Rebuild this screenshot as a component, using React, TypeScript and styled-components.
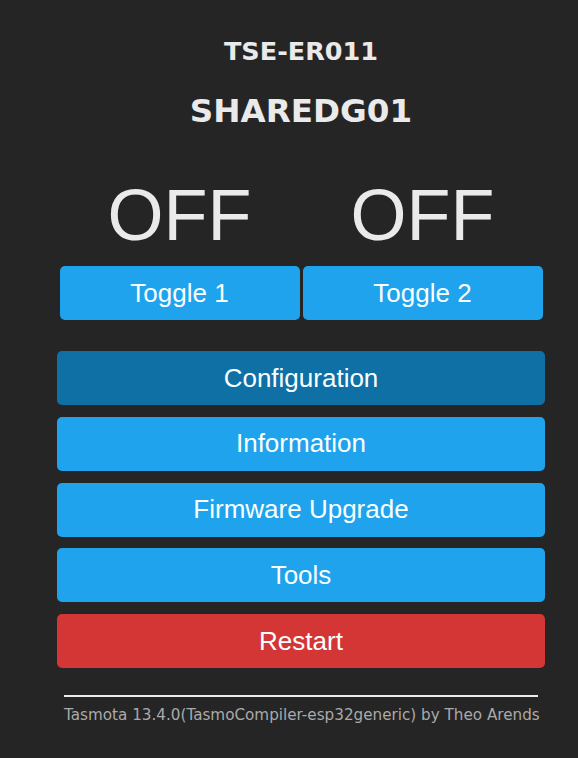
import React from 'react';
import styled, { createGlobalStyle } from 'styled-components';

const GlobalStyle = createGlobalStyle`
  html, body {
    margin: 0;
    padding: 0;
    background: #252525;
  }
  body {
    font-family: 'DejaVu Sans', Verdana, sans-serif;
    color: #eaeaea;
  }
`;

const Page = styled.div`
  width: 488px;
  margin: 0 0 0 57px;
  padding-top: 36px;
  display: flex;
  flex-direction: column;
  align-items: center;
`;

const Module = styled.h3`
  margin: 0;
  font-size: 25.5px;
  line-height: 30px;
  font-weight: bold;
  text-align: center;
`;

const DeviceName = styled.h2`
  margin: 26px 0 0;
  font-size: 32.6px;
  line-height: 38px;
  font-weight: bold;
  text-align: center;
`;

const StateRow = styled.div`
  width: 483px;
  margin-top: 44px;
  display: grid;
  grid-template-columns: 1fr 1fr;
  column-gap: 3px;
`;

const State = styled.div`
  font-family: 'Liberation Sans', Arial, sans-serif;
  font-size: 72px;
  line-height: 82px;
  text-align: center;
  color: #eaeaea;
`;

const ToggleRow = styled.div`
  width: 483px;
  margin-top: 10px;
  display: grid;
  grid-template-columns: 1fr 1fr;
  column-gap: 3px;
`;

const Button = styled.button<{ $tone?: 'blue' | 'dark' | 'red' }>`
  border: 0;
  border-radius: 5px;
  height: 54px;
  width: 100%;
  padding: 0;
  font-family: 'Liberation Sans', Arial, sans-serif;
  font-size: 26px;
  color: #faffff;
  cursor: pointer;
  background: ${({ $tone }) =>
    $tone === 'dark' ? '#0e70a4' : $tone === 'red' ? '#d43535' : '#1fa3ec'};
`;

const Menu = styled.div`
  width: 100%;
  margin-top: 31px;
  display: flex;
  flex-direction: column;
  gap: 11.8px;
`;

const Footer = styled.div`
  width: 474px;
  margin-top: 27px;
  border-top: 2px solid #eaeaea;
  padding-top: 9px;
  text-align: center;
  font-size: 15.2px;
  line-height: 18px;
  color: #aaaaaa;
  white-space: nowrap;
`;

export default function App() {
  return (
    <>
      <GlobalStyle />
      <Page>
        <Module>TSE-ER011</Module>
        <DeviceName>SHAREDG01</DeviceName>
        <StateRow>
          <State>OFF</State>
          <State>OFF</State>
        </StateRow>
        <ToggleRow>
          <Button>Toggle 1</Button>
          <Button>Toggle 2</Button>
        </ToggleRow>
        <Menu>
          <Button $tone="dark">Configuration</Button>
          <Button>Information</Button>
          <Button>Firmware Upgrade</Button>
          <Button>Tools</Button>
          <Button $tone="red">Restart</Button>
        </Menu>
        <Footer>Tasmota 13.4.0(TasmoCompiler-esp32generic) by Theo Arends</Footer>
      </Page>
    </>
  );
}
